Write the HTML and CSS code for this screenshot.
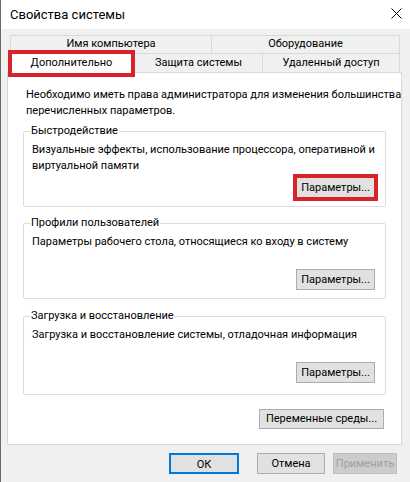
FILE: index.html
```html
<!DOCTYPE html>
<html lang="ru">
<head>
<meta charset="utf-8">
<title>Свойства системы</title>
<link rel="stylesheet" href="styles.css">
</head>
<body>
<div class="window">
  <div class="titlebar">
    <span class="title">Свойства системы</span>
    <span class="close"><svg width="11" height="11" viewBox="0 0 11 11"><path d="M0.5 0.5L10.5 10.5M10.5 0.5L0.5 10.5" stroke="#000" stroke-width="1" fill="none"/></svg></span>
  </div>
  <div class="dialog">
    <div class="tabs">
      <div class="tab-row back">
        <div class="tab">Имя компьютера</div>
        <div class="tab">Оборудование</div>
      </div>
      <div class="tab-row front">
        <div class="tab selected">Дополнительно</div>
        <div class="tab">Защита системы</div>
        <div class="tab">Удаленный доступ</div>
      </div>
    </div>
    <div class="panel">
      <p class="note">Необходимо иметь права администратора для изменения большинства<br>перечисленных параметров.</p>
      <fieldset class="group g1">
        <legend>Быстродействие</legend>
        <p>Визуальные эффекты, использование процессора, оперативной и<br>виртуальной памяти</p>
        <div class="actions"><button class="btn highlight">Параметры...</button></div>
      </fieldset>
      <fieldset class="group g2">
        <legend>Профили пользователей</legend>
        <p>Параметры рабочего стола, относящиеся ко входу в систему</p>
        <div class="actions"><button class="btn">Параметры...</button></div>
      </fieldset>
      <fieldset class="group g3">
        <legend>Загрузка и восстановление</legend>
        <p>Загрузка и восстановление системы, отладочная информация</p>
        <div class="actions"><button class="btn">Параметры...</button></div>
      </fieldset>
      <div class="env"><button class="btn wide">Переменные среды...</button></div>
    </div>
    <div class="footer">
      <button class="btn default">ОК</button>
      <button class="btn cancel">Отмена</button>
      <button class="btn disabled">Применить</button>
    </div>
  </div>
</div>
</body>
</html>
```
FILE: styles.css
```css
* { box-sizing: border-box; }
html, body { margin: 0; padding: 0; }
body {
  width: 410px;
  height: 482px;
  overflow: hidden;
  font-family: Roboto, "Liberation Sans", Arial, sans-serif;
  font-size: 11px;
  color: #000;
  background: #f0f0f0;
}
.window {
  width: 410px;
  height: 482px;
  display: flex;
  flex-direction: column;
  border-left: 1px solid #6a6a6a;
  background: #f0f0f0;
}
.titlebar {
  height: 29px;
  background: #fff;
  display: flex;
  align-items: center;
  justify-content: space-between;
  padding: 0 8px 0 9px;
}
.title { font-size: 13px; line-height: 16px; }
.close { display: flex; width: 11px; height: 11px; margin-top: -2px; }
.dialog {
  flex: 1;
  display: flex;
  flex-direction: column;
  padding: 6px 8px 0 6px;
}
.tabs {
  margin-left: 3px;
  width: 390px;
  display: flex;
  flex-direction: column;
}
.tab-row { display: grid; }
.tab-row.back { grid-template-columns: 202px 188px; height: 18px; }
.tab-row.front { grid-template-columns: 125px 128px 137px; height: 20px; }
.tab {
  border: 1px solid #d9d9d9;
  border-left: none;
  background: #f0f0f0;
  text-align: center;
  line-height: 16px;
  white-space: nowrap;
}
.tab-row .tab:first-child { border-left: 1px solid #d9d9d9; }
.tab-row.back .tab { border-bottom: none; }
.tab-row.front .tab { line-height: 18px; }
.tab.selected {
  position: relative;
  z-index: 1;
  background: #fff;
  border-color: #fff;
  margin: 0 3px 0 1px;
  outline: 4px solid #d8232a;
  outline-offset: -1px;
  height: 21px;
}
.panel {
  height: 373px;
  background: #fff;
  border: 1px solid #d9d9d9;
  margin-top: -1px;
  padding: 14px 15px 0 15px;
  display: flex;
  flex-direction: column;
}
p { margin: 0; line-height: 16px; white-space: nowrap; }
.note { margin: 0 0 4px 3px; }
.group {
  margin: 0;
  border: 1px solid #dcdcdc;
  border-radius: 2px;
  padding: 3px 10px 8px 8px;
  min-width: 0;
}
.group legend {
  padding: 0 1px;
  margin-left: -2px;
  line-height: 16px;
}
.group p { height: 32px; margin-bottom: 3px; }
.g2 { margin-top: 8px; }
.g3 { margin-top: 9px; padding-bottom: 11px; }
.actions {
  display: flex;
  justify-content: flex-end;
}
.btn {
  font-family: inherit;
  font-size: 11px;
  color: #000;
  background: #e1e1e1;
  border: 1px solid #adadad;
  border-radius: 0;
  height: 21px;
  width: 79px;
  padding: 0;
  line-height: 19px;
}
.btn.highlight {
  outline: 4px solid #d8232a;
  outline-offset: -1px;
}
.env {
  margin-top: 14px;
  display: flex;
  justify-content: flex-end;
  padding-right: 2px;
}
.btn.wide { width: 125px; height: 20px; line-height: 18px; }
.footer {
  display: flex;
  justify-content: flex-end;
  gap: 8px;
  padding: 8px 5px 0 0;
}
.footer .btn { width: 70px; }
.footer .btn.default { border: 2px solid #0078d7; margin-right: 10px; }
.footer .btn.cancel { width: 68px; }
.footer .btn.disabled {
  background: #cccccc;
  border-color: #bfbfbf;
  color: #a0a0a0;
  width: 64px;
}
```
